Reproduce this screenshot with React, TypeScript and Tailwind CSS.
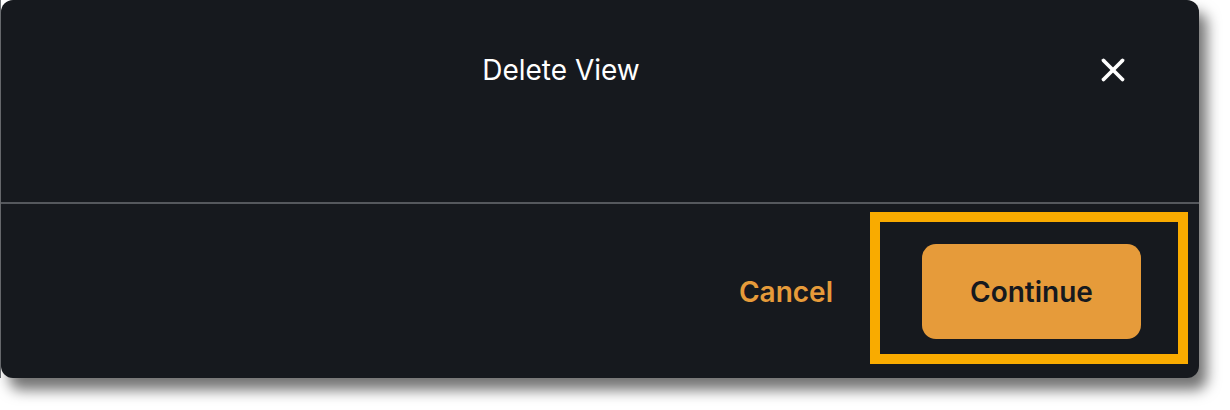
import { X } from 'lucide-react';

export default function App() {
  return (
    <div className="flex h-[410px] w-[1230px] bg-white font-['Inter',sans-serif]">
      <div className="h-[378px] w-px bg-[#6b6e72]" />
      <div className="flex h-[378px] w-[1198px] flex-col rounded-[12px] bg-[#16191e] shadow-[8px_12px_14px_rgba(0,0,0,0.55)]">
        <div className="flex h-[202px] items-start pl-[36px] pr-[58px] pt-[42px]">
          <h2 className="flex-1 text-center text-[28px] leading-[56px] font-normal text-white">Delete View</h2>
          <button className="flex h-[56px] w-[56px] items-center justify-center text-white">
            <X className="h-[38px] w-[38px]" strokeWidth={2.4} />
          </button>
        </div>
        <div className="h-[2px] bg-[#55585d]" />
        <div className="flex flex-1 items-start justify-end pr-[11px] pt-[8px]">
          <button className="mr-[37px] mt-[63px] text-[28px] leading-[34px] font-semibold text-[#e69b3a]">Cancel</button>
          <div className="border-[10px] border-[#f9ab00] pb-[15px] pl-[42px] pr-[37px] pt-[22px]">
            <button className="flex h-[95px] w-[219px] items-center justify-center rounded-[14px] bg-[#e69b3a] text-[28px] font-semibold text-[#16191e]">
              Continue
            </button>
          </div>
        </div>
      </div>
    </div>
  );
}
